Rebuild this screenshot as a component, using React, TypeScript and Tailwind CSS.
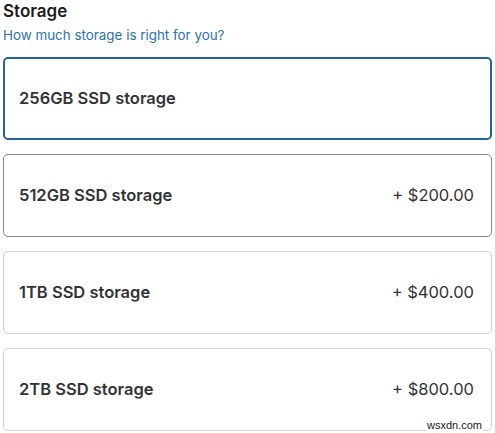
import React from "react";

const options = [
  { label: "256GB SSD storage", price: "", state: "selected" },
  { label: "512GB SSD storage", price: "+ $200.00", state: "hover" },
  { label: "1TB SSD storage", price: "+ $400.00", state: "" },
  { label: "2TB SSD storage", price: "+ $800.00", state: "" },
];

export default function App() {
  return (
    <div className="relative w-[495px] h-[433px] bg-white px-[3px] pt-[1px] font-['Inter','Liberation_Sans',sans-serif] text-[#333336]">
      <h2 className="text-[17px] leading-[20px] font-semibold text-[#1d1d1f]">Storage</h2>
      <a className="block mt-[6px] text-[13.4px] leading-[16px] text-[#2d73ab]">How much storage is right for you?</a>

      <div className="mt-[14px] flex flex-col gap-[14px]">
        {options.map((o) => (
          <div
            key={o.label}
            className={`h-[83px] rounded-[5px] flex items-center justify-between ${
              o.state === "selected"
                ? "border-2 border-[#1f6896] pl-[14px] pr-[16px]"
                : o.state === "hover"
                ? "border border-[#86868b] pl-[15px] pr-[17px]"
                : "border border-[#d2d2d7] pl-[15px] pr-[17px]"
            }`}
          >
            <span className="text-[16.5px] font-semibold">{o.label}</span>
            <span className="text-[16.5px]">{o.price}</span>
          </div>
        ))}
      </div>

      <span className="absolute right-[12px] bottom-[1px] bg-white px-[1px] text-[11px] leading-[13px] text-[#222] font-['Liberation_Sans',sans-serif]">
        wsxdn.com
      </span>
    </div>
  );
}
